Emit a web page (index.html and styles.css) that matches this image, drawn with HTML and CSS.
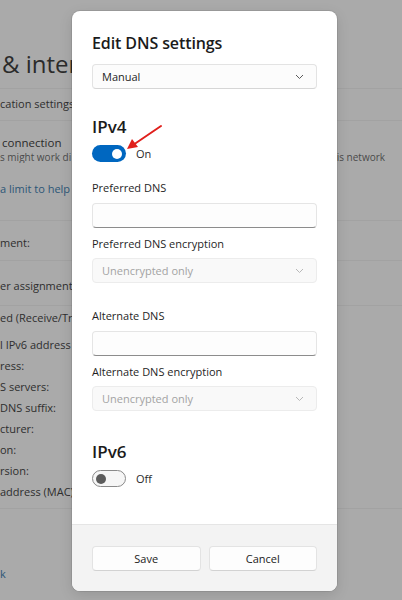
FILE: index.html
```html
<!DOCTYPE html>
<html>
<head>
<meta charset="utf-8">
<link rel="stylesheet" href="styles.css">
</head>
<body>
<div class="bg">
  <div class="row hdr"><span class="clip big">&amp; inter</span></div>
  <div class="row r1"><span class="clip">cation settings</span></div>
  <div class="row r2">
    <div class="clip conn">connection</div>
    <div class="sub"><span class="clip">s might work di</span><span class="right">is network</span></div>
    <div class="clip link">a limit to help</div>
  </div>
  <div class="row r3"><span class="clip">ment:</span></div>
  <div class="row r4"><span class="clip">er assignment</span></div>
  <div class="row r5">
    <div class="clip ln">ed (Receive/Tra</div>
    <div class="clip ln second">l IPv6 address</div>
    <div class="clip ln">ress:</div>
    <div class="clip ln">S servers:</div>
    <div class="clip ln">DNS suffix:</div>
    <div class="clip ln">cturer:</div>
    <div class="clip ln">on:</div>
    <div class="clip ln">rsion:</div>
    <div class="clip ln">address (MAC)</div>
  </div>
  <div class="row r6"><span class="clip link">k</span></div>
</div>

<div class="dialog">
  <div class="body">
    <div class="title">Edit DNS settings</div>
    <div class="select">
      <span>Manual</span>
      <svg class="chev" width="9" height="6" viewBox="0 0 9 6"><polyline points="1,1 4.5,4.5 8,1" fill="none" stroke="#5a5a5a" stroke-width="1"/></svg>
    </div>

    <div class="heading ipv4">IPv4</div>
    <div class="toggle-row">
      <span class="toggle on"><span class="knob"></span></span>
      <span class="tlabel">On</span>
    </div>

    <div class="label first-label">Preferred DNS</div>
    <div class="input"></div>
    <div class="label">Preferred DNS encryption</div>
    <div class="select disabled">
      <span>Unencrypted only</span>
      <svg class="chev" width="9" height="6" viewBox="0 0 9 6"><polyline points="1,1 4.5,4.5 8,1" fill="none" stroke="#b8b8b8" stroke-width="1"/></svg>
    </div>

    <div class="label alt-label">Alternate DNS</div>
    <div class="input"></div>
    <div class="label">Alternate DNS encryption</div>
    <div class="select disabled">
      <span>Unencrypted only</span>
      <svg class="chev" width="9" height="6" viewBox="0 0 9 6"><polyline points="1,1 4.5,4.5 8,1" fill="none" stroke="#b8b8b8" stroke-width="1"/></svg>
    </div>

    <div class="heading ipv6">IPv6</div>
    <div class="toggle-row">
      <span class="toggle off"><span class="knob"></span></span>
      <span class="tlabel">Off</span>
    </div>
  </div>
  <div class="footer">
    <button class="btn">Save</button>
    <button class="btn">Cancel</button>
  </div>
  <svg class="arrow" width="40" height="30" viewBox="0 0 40 30">
    <line x1="38" y1="3" x2="10" y2="22" stroke="#e0201c" stroke-width="2" stroke-linecap="round"/>
    <polygon points="4,26 9,16 15,24" fill="#e0201c"/>
  </svg>
</div>
</body>
</html>
```

FILE: styles.css
```css
* { box-sizing: border-box; }
html, body { margin: 0; padding: 0; }
body {
  width: 402px;
  height: 600px;
  overflow: hidden;
  background: #aaaaaa;
  font-family: "Open Sans", "Noto Sans", sans-serif;
  color: #2e2e2e;
  position: relative;
}

.bg { width: 402px; }
.row {
  border-top: 1px solid #a2a2a2;
  white-space: nowrap;
  overflow: hidden;
  font-size: 11px;
}
.clip {
  display: block;
  width: 72px;
  overflow: hidden;
  white-space: nowrap;
}
.hdr { height: 88px; padding-top: 49px; border-top: none; }
.big { font-size: 24px; line-height: 30px; color: #2b2b2b; padding-left: 2px; }
.r1 { height: 32px; line-height: 30px; }
.r2 { height: 100px; padding-top: 14px; }
.conn { font-size: 11.5px; line-height: 16px; color: #2b2b2b; padding-left: 2px; }
.sub {
  font-size: 10px; line-height: 12px; color: #4a4a4a;
  display: flex; justify-content: space-between; padding-right: 17px;
}
.r2 .link { margin-top: 18px; line-height: 16px; }
.link { color: #2c5677; font-size: 11px; }
.r3 { height: 40px; padding-top: 14px; line-height: 16px; }
.r4 { height: 45px; padding-top: 17px; line-height: 16px; }
.r5 { height: 203px; padding-top: 1px; }
.ln { line-height: 21px; }
.ln.second { margin-top: 6px; }
.r6 { height: 92px; padding-top: 57px; line-height: 16px; }

.dialog {
  position: absolute;
  left: 72px;
  top: 11px;
  width: 265px;
  height: 580px;
  background: #ffffff;
  border-radius: 8px;
  box-shadow: 0 0 0 1px rgba(0,0,0,0.08), 0 4px 14px rgba(0,0,0,0.12);
  display: flex;
  flex-direction: column;
  overflow: hidden;
  color: #1b1b1b;
}
.body {
  flex: 1;
  padding: 21px 20px 0 20px;
  display: flex;
  flex-direction: column;
}
.title {
  font-size: 16px;
  font-weight: 600;
  line-height: 22px;
  letter-spacing: -0.1px;
}
.select {
  margin-top: 10px;
  height: 25px;
  border: 1px solid #e3e3e3;
  border-bottom-color: #d6d6d6;
  border-radius: 4px;
  background: #fcfcfc;
  display: flex;
  align-items: center;
  justify-content: space-between;
  padding: 0 12px 0 9px;
  font-size: 11px;
  color: #1f1f1f;
}
.select.disabled {
  margin-top: 6px;
  background: #f9f9f9;
  border-color: #ececec;
  color: #a3a3a3;
}
.heading {
  font-size: 17px;
  font-weight: 600;
  line-height: 22px;
}
.ipv4 { margin-top: 27px; }
.ipv6 { margin-top: 30px; }
.toggle-row {
  margin-top: 7px;
  display: flex;
  align-items: center;
  height: 17px;
}
.toggle {
  width: 34px;
  height: 17px;
  border-radius: 9px;
  position: relative;
  display: inline-block;
}
.toggle.on { background: #0067c0; }
.toggle.off { background: #f6f6f6; border: 1px solid #8a8a8a; }
.knob {
  position: absolute;
  top: 50%;
  width: 10px;
  height: 10px;
  margin-top: -5px;
  border-radius: 50%;
}
.on .knob { right: 4px; background: #ffffff; }
.off .knob { left: 3px; background: #5c5c5c; }
.tlabel { margin-left: 10px; font-size: 11px; color: #2a2a2a; }

.label {
  font-size: 11px;
  line-height: 16px;
  margin-top: 8px;
  color: #1f1f1f;
}
.first-label { margin-top: 18px; }
.alt-label { margin-top: 25px; }
.input {
  margin-top: 7px;
  height: 25px;
  border: 1px solid #e5e5e5;
  border-bottom: 1px solid #8c8c8c;
  border-radius: 4px;
  background: #fdfdfd;
}

.footer {
  height: 67px;
  background: #f3f3f3;
  border-top: 1px solid #e5e5e5;
  padding: 21px 20px 0 20px;
  display: flex;
  gap: 8px;
}
.btn {
  flex: 1;
  height: 25px;
  border: 1px solid #e3e3e3;
  border-bottom-color: #d2d2d2;
  border-radius: 4px;
  background: #fdfdfd;
  font-family: "Open Sans", "Noto Sans", sans-serif;
  font-size: 11px;
  color: #1b1b1b;
  padding: 0;
}

.arrow {
  position: absolute;
  left: 51px;
  top: 112px;
}
```
